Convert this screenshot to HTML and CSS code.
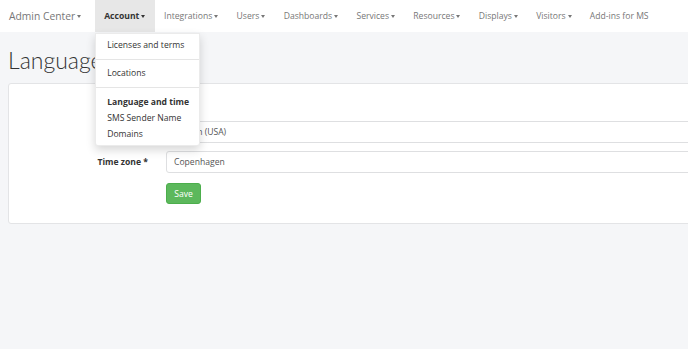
FILE: index.html
```html
<!DOCTYPE html>
<html lang="en">
<head>
<meta charset="utf-8">
<title>Language and time</title>
<link rel="stylesheet" href="styles.css">
</head>
<body>
<nav class="navbar">
  <a class="brand">Admin Center<span class="caret"></span></a>
  <ul class="nav">
    <li class="nav-item active">
      <a>Account<span class="caret"></span></a>
      <ul class="dropdown">
        <li class="dd-item">Licenses and terms</li>
        <li class="dd-divider"></li>
        <li class="dd-item">Locations</li>
        <li class="dd-divider"></li>
        <li class="dd-item current">Language and time</li>
        <li class="dd-item">SMS Sender Name</li>
        <li class="dd-item">Domains</li>
      </ul>
    </li>
    <li class="nav-item"><a>Integrations<span class="caret"></span></a></li>
    <li class="nav-item"><a>Users<span class="caret"></span></a></li>
    <li class="nav-item"><a>Dashboards<span class="caret"></span></a></li>
    <li class="nav-item"><a>Services<span class="caret"></span></a></li>
    <li class="nav-item"><a>Resources<span class="caret"></span></a></li>
    <li class="nav-item"><a>Displays<span class="caret"></span></a></li>
    <li class="nav-item"><a>Visitors<span class="caret"></span></a></li>
    <li class="nav-item"><a>Add-ins for MS</a></li>
  </ul>
</nav>
<main class="content">
  <h1 class="page-title">Language and time</h1>
  <section class="panel">
    <form class="form">
      <label class="label">Language *</label>
      <div class="input">English (USA)</div>
      <label class="label">Time zone *</label>
      <div class="input">Copenhagen</div>
      <span></span>
      <div><button type="button" class="btn-save">Save</button></div>
    </form>
  </section>
</main>
</body>
</html>
```

FILE: styles.css
```css
html, body {
  margin: 0;
  padding: 0;
  overflow: hidden;
}
body {
  background: #f5f6f8;
  font-family: "Open Sans", "Liberation Sans", sans-serif;
  font-size: 8.6px;
  color: #333;
  width: 688px;
  height: 349px;
}
.navbar {
  display: flex;
  align-items: stretch;
  height: 32px;
  background: #fff;
}
.brand {
  display: flex;
  align-items: center;
  padding: 0 14px 0 9px;
  font-size: 10.3px;
  color: #777;
}
.caret {
  display: inline-block;
  width: 0;
  height: 0;
  margin-left: 2px;
  margin-top: 1px;
  border-top: 3px solid;
  border-left: 2.5px solid transparent;
  border-right: 2.5px solid transparent;
}
.nav {
  display: flex;
  list-style: none;
  margin: 0;
  padding: 0;
}
.nav-item {
  position: relative;
  display: flex;
  align-items: center;
  padding: 0 9.15px;
  color: #777;
}
.nav-item a {
  display: flex;
  align-items: center;
}
.nav-item.active {
  background: #e7e7e7;
  color: #333;
  font-weight: 700;
  padding: 0 9.6px 0 9px;
}
.dropdown {
  position: absolute;
  top: 33px;
  left: 0;
  width: 103px;
  margin: 0;
  padding: 3px 0;
  list-style: none;
  background: #fff;
  border: 1px solid rgba(0, 0, 0, 0.08);
  border-radius: 0 0 3px 3px;
  box-shadow: 0 4px 10px rgba(0, 0, 0, 0.16);
  font-weight: 400;
  color: #333;
  z-index: 10;
}
.dd-item {
  line-height: 16.3px;
  padding: 0 11px;
  white-space: nowrap;
}
.dd-item.current {
  font-weight: 700;
}
.dd-divider {
  height: 1px;
  margin: 5.5px 0;
  background: #e5e5e5;
}
.content {
  padding: 0 0 0 8px;
}
.page-title {
  margin: 13.5px 0 9.5px 0;
  font-family: Lato, "Open Sans", sans-serif;
  font-weight: 300;
  font-size: 23px;
  line-height: 28px;
  color: #333;
  white-space: nowrap;
}
.panel {
  margin-right: -40px;
  background: #fff;
  border: 1px solid #e3e4e6;
  border-radius: 3px;
  padding: 37px 0 19px 0;
}
.form {
  display: grid;
  grid-template-columns: 139px 1fr;
  column-gap: 18px;
  row-gap: 8px;
  align-items: center;
}
.label {
  text-align: right;
  font-weight: 700;
  color: #333;
}
.input {
  height: 20px;
  line-height: 20px;
  border: 1px solid #dedfe1;
  border-radius: 3px;
  padding: 0 7px;
  color: #555;
  background: #fff;
}
.btn-save {
  margin-top: 2px;
  width: 35px;
  height: 21px;
  padding: 0;
  background: #5cb85c;
  border: 1px solid #4cae4c;
  border-radius: 3px;
  color: #fff;
  font-family: "Open Sans", "Liberation Sans", sans-serif;
  font-size: 8.6px;
}
```
